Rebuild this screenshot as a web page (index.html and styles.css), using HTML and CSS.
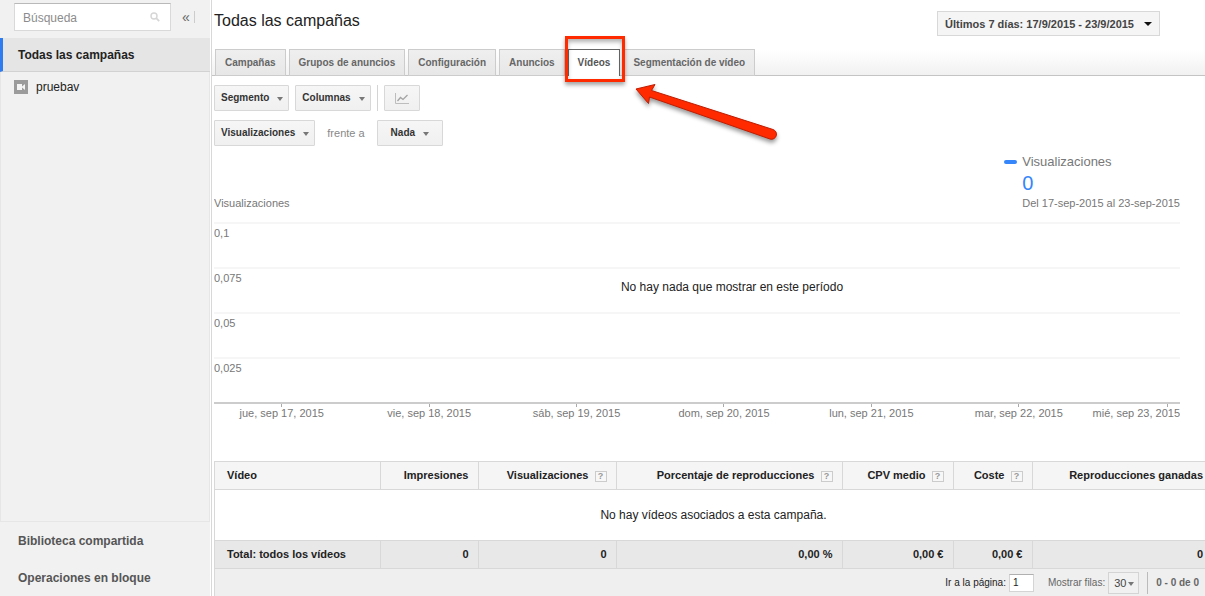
FILE: index.html
```html
<!DOCTYPE html>
<html lang="es">
<head>
<meta charset="utf-8">
<title>Todas las campañas</title>
<link rel="stylesheet" href="styles.css">
</head>
<body>
<div class="app">
  <aside class="sidebar">
    <div class="search-row">
      <div class="search">
        <input class="search-input" type="text" placeholder="Búsqueda" aria-label="Búsqueda">
        <svg class="search-icon" viewBox="0 0 10 10" aria-hidden="true"><circle cx="4" cy="4" r="3" fill="none" stroke="#d6d6d6" stroke-width="1.4"/><path d="M6.2 6.2 9.2 9.2" stroke="#d6d6d6" stroke-width="1.8"/></svg>
      </div>
      <button class="collapse" aria-label="Contraer">«</button>
    </div>
    <a class="nav-current" href="#">Todas las campañas</a>
    <div class="campaigns">
      <a class="campaign" href="#">
        <svg class="campaign-icon" viewBox="0 0 14 14" aria-hidden="true"><path fill="#9b9b9b" d="M0 0h14v14H0z"/><path fill="#f4f4f4" d="M3 4h5v6H3zM8 6.500 11 4v6L8 7.500z"/></svg>
        <span>pruebav</span>
      </a>
    </div>
    <nav class="tools">
      <a href="#">Biblioteca compartida</a>
      <a href="#">Operaciones en bloque</a>
    </nav>
  </aside>

  <main class="main">
    <header class="header">
      <div class="title-row">
        <h1 class="title">Todas las campañas</h1>
        <button class="date-range">Últimos 7 días: 17/9/2015 - 23/9/2015 <span class="caret caret-dark"></span></button>
      </div>
      <nav class="tabs">
        <a class="tab" href="#">Campañas</a>
        <a class="tab" href="#">Grupos de anuncios</a>
        <a class="tab" href="#">Configuración</a>
        <a class="tab" href="#">Anuncios</a>
        <a class="tab tab-active" href="#">Vídeos<span class="highlight"></span>
          <svg class="arrow" viewBox="0 0 150 66" aria-hidden="true"><path d="M5 6 24 1.500 20.500 7.500 142 46.500A4.800 4.800 0 0 1 139 56L18.500 14 17.500 20.500Z" fill="#ff2a00" stroke="#c01c00" stroke-width="1" stroke-linejoin="round"/></svg></a>
        <a class="tab" href="#">Segmentación de vídeo</a>
      </nav>
    </header>

    <div class="toolbar">
      <button class="btn">Segmento <span class="caret"></span></button>
      <button class="btn">Columnas <span class="caret"></span></button>
      <span class="divider"></span>
      <button class="btn btn-chart" aria-label="Gráfico"><svg class="chart-icon" viewBox="0 0 14 11" aria-hidden="true"><path d="M.5 0v10.500H14" fill="none" stroke="#bdbdbd"/><path d="M2.500 8 5.500 4.500 8 6.500 12.500 2" fill="none" stroke="#a3a3a3" stroke-width="1.300"/></svg></button>
    </div>
    <div class="toolbar toolbar-metric">
      <button class="btn">Visualizaciones <span class="caret"></span></button>
      <span class="versus">frente a</span>
      <button class="btn btn-none">Nada <span class="caret"></span></button>
    </div>

    <section class="chart">
      <div class="chart-head">
        <div class="axis-title">Visualizaciones</div>
        <div class="legend">
          <div class="legend-name">Visualizaciones</div>
          <div class="legend-value">0</div>
          <div class="legend-date">Del 17-sep-2015 al 23-sep-2015</div>
        </div>
      </div>
      <div class="plot">
        <div class="band">0,1</div>
        <div class="band">0,075</div>
        <div class="band">0,05</div>
        <div class="band">0,025</div>
        <div class="empty">No hay nada que mostrar en este período</div>
      </div>
      <div class="axis">
        <span>jue, sep 17, 2015</span>
        <span>vie, sep 18, 2015</span>
        <span>sáb, sep 19, 2015</span>
        <span>dom, sep 20, 2015</span>
        <span>lun, sep 21, 2015</span>
        <span>mar, sep 22, 2015</span>
        <span>mié, sep 23, 2015</span>
      </div>
    </section>

    <section class="report">
      <table class="table">
        <colgroup><col class="c-video"><col class="c-impr"><col class="c-views"><col class="c-rate"><col class="c-cpv"><col class="c-cost"><col></colgroup>
        <thead>
          <tr>
            <th scope="col">Vídeo</th>
            <th scope="col">Impresiones</th>
            <th scope="col">Visualizaciones <button class="help">?</button></th>
            <th scope="col">Porcentaje de reproducciones <button class="help">?</button></th>
            <th scope="col">CPV medio <button class="help">?</button></th>
            <th scope="col">Coste <button class="help">?</button></th>
            <th scope="col">Reproducciones ganadas</th>
          </tr>
        </thead>
        <tbody>
          <tr><td class="none" colspan="7">No hay vídeos asociados a esta campaña.</td></tr>
        </tbody>
        <tfoot>
          <tr><td>Total: todos los vídeos</td><td>0</td><td>0</td><td>0,00 %</td><td>0,00 €</td><td>0,00 €</td><td>0</td></tr>
        </tfoot>
      </table>
      <div class="pager">
        <label class="go" for="page">Ir a la página:</label>
        <input class="page-input" id="page" type="text" value="1">
        <label class="rows-label" for="rows">Mostrar filas:</label>
        <span class="rows"><select class="rows-select" id="rows"><option>30</option><option>50</option></select><span class="caret"></span></span>
        <span class="count">0 - 0 de 0</span>
      </div>
    </section>
  </main>
</div>
</body>
</html>
```
FILE: styles.css
```css
* { box-sizing: border-box; }
body { margin: 0; background: #fff; color: #222; font: 11px/14px "Liberation Sans", Arial, sans-serif; }
a { color: inherit; text-decoration: none; }
button, input, select { font: inherit; color: inherit; margin: 0; }
.app { display: flex; min-height: 100vh; overflow: hidden; }

.sidebar { display: flex; flex-direction: column; flex: 0 0 210px; background: #f1f1f1; }
.search-row { display: flex; align-items: center; height: 38px; padding: 0 0 4px 14px; }
.search { position: relative; width: 157px; }
.search-input { display: block; width: 100%; height: 28px; padding: 1px 8px 0; border: 1px solid #d9d9d9; border-top-color: #b9b9b9; background: #fff; font-size: 12px; }
.search-input::placeholder { color: #8c8c8c; opacity: 1; }
.search-icon { position: absolute; right: 11px; top: 9px; width: 10px; height: 10px; }
.collapse { height: 12px; margin-left: 11px; padding: 0 4px 0 0; border: 0; border-right: 1px solid #ccc; background: none; color: #666; font-size: 14px; line-height: 10px; }
.nav-current { height: 34px; padding: 0 15px; border-left: 3px solid #2f7bf0; border-bottom: 1px solid #d2d2d2; background: #e5e5e5; font-size: 12px; font-weight: bold; line-height: 35px; }
.campaigns { flex: 1; padding: 7px 13px; border: 1px solid #e6e6e6; border-top: 0; }
.campaign { display: flex; gap: 8px; align-items: center; font-size: 12px; line-height: 16px; }
.campaign-icon { width: 14px; height: 14px; }
.tools { display: flex; flex-direction: column; gap: 21px; padding: 11px 18px 10px; color: #555; font-size: 12px; font-weight: bold; line-height: 16px; }

.main { display: flex; flex-direction: column; flex: 1; min-width: 0; margin-left: 1px; padding-left: 2px; border-left: 1px solid #d8d8d8; }
.header { margin-left: -2px; padding-left: 2px; border-bottom: 1px solid #c4c4c4; background: linear-gradient(#fff 50px, #f1f1f1); }
.title-row { display: flex; justify-content: space-between; align-items: flex-start; height: 49px; padding: 11px 45px 0 0; }
.title { margin: 0; font-size: 16px; font-weight: normal; line-height: 20px; }
.date-range { display: flex; align-items: center; gap: 10px; height: 25px; padding: 0 7px; border: 1px solid #d8d8d8; background: #f5f5f5; color: #444; font-weight: bold; }
.caret { display: inline-block; border: 3px solid transparent; border-top: 4px solid #777; border-bottom: 0; }
.caret-dark { border-width: 4px 4px 0; border-top-color: #111; }
.tabs { display: flex; gap: 3px; margin: 0 0 -1px 1px; }
.tab { height: 27px; padding: 0 9px; border: 1px solid #ccc; background: linear-gradient(#efefef, #e7e7e7); color: #666; font-size: 10px; font-weight: bold; line-height: 26px; }
.tab-active { position: relative; border-color: #666; border-bottom: 0; background: #fff; color: #555; }
.highlight { position: absolute; left: -4px; right: -6px; top: -14px; bottom: -6px; border: 3px solid #ff2a00; box-shadow: 0 3px 4px rgba(0,0,0,.35), inset 0 3px 4px rgba(0,0,0,.3); }
.arrow { position: absolute; left: 62px; top: 33px; width: 150px; height: 66px; filter: drop-shadow(0 3px 2px rgba(0,0,0,.4)); }

.toolbar { display: flex; align-items: center; gap: 6px; margin-top: 9px; }
.btn { display: flex; align-items: center; gap: 8px; height: 26px; padding: 0 5px 0 6px; border: 1px solid #d8d8d8; border-radius: 1px; background: linear-gradient(#f6f6f6, #f0f0f0); color: #333; font-size: 10px; font-weight: bold; }
.btn .caret { margin-top: 1px; }
.divider { width: 1px; height: 26px; background: #d4d4d4; }
.btn-chart { padding: 0 10px; }
.chart-icon { width: 14px; height: 11px; }
.toolbar-metric { gap: 12px; }
.btn-none { padding: 0 13px; }
.versus { color: #888; }

.chart { margin-right: 25px; padding-top: 8px; color: #777; overflow: hidden; }
.chart-head { display: flex; justify-content: space-between; align-items: flex-end; padding-bottom: 12px; }
.legend-name { position: relative; font-size: 13px; line-height: 16px; }
.legend-name::before { content: ""; position: absolute; left: -18px; top: 6px; width: 13px; height: 4px; border-radius: 2px; background: #3585fb; }
.legend-value { color: #3585fb; font-size: 20px; line-height: 26px; }
.plot { position: relative; border-bottom: 2px solid #ccc; }
.band { height: 45px; padding-top: 2px; border-top: 2px solid #f6f6f6; line-height: 15px; }
.empty { position: absolute; left: 70px; right: 0; top: 57px; color: #222; font-size: 12px; line-height: 16px; text-align: center; }
.axis { display: grid; grid-template-columns: repeat(6, 12fr) 7fr; margin-left: -6px; line-height: 12px; text-align: center; white-space: nowrap; }
.axis span::before { content: ""; display: block; width: 1px; height: 3px; margin: 0 auto; background: #aaa; }
.axis span:last-child { text-align: right; }
.axis span:last-child::before { margin-right: 12px; }

.report { display: flex; flex-direction: column; flex: 1; margin: 42px -8px 0 0; border-left: 1px solid #d8d8d8; background: #efefef; }
.table { width: 100%; table-layout: fixed; border-collapse: collapse; }
.c-video { width: 165px; } .c-impr { width: 98px; } .c-views { width: 138px; } .c-rate { width: 226px; } .c-cpv { width: 111px; } .c-cost { width: 79px; }
th, td { height: 28px; padding: 0 9px 1px 12px; border: 1px solid #d8d8d8; border-left: 0; text-align: right; font-weight: bold; white-space: nowrap; }
th:first-child, tfoot td:first-child { text-align: left; }
th { background: #f5f5f5; }
tfoot td { background: #e8e8e8; }
.table .none { height: 51px; padding: 0; background: #fff; font-size: 12px; font-weight: normal; text-align: center; }
.help { width: 12px; height: 11px; margin-left: 3px; padding: 0; border: 1px solid #ccc; background: #f7f7f7; color: #999; font-size: 9px; font-weight: bold; line-height: 9px; vertical-align: middle; }

.pager { display: flex; align-items: center; justify-content: flex-end; height: 27px; padding-right: 14px; font-size: 10px; }
.page-input { width: 25px; height: 18px; margin: 0 14px 0 3px; padding: 0 3px; border: 1px solid #d4d4d4; border-top-color: #b0b0b0; background: #fff; }
.rows-label { color: #666; }
.rows { position: relative; margin: 0 8px 0 3px; }
.rows-select { display: block; width: 31px; height: 22px; padding: 0 5px; border: 1px solid #d4d4d4; background: #f1f1f1; appearance: none; color: #444; font-size: 11px; }
.rows .caret { position: absolute; right: 5px; top: 10px; pointer-events: none; }
.count { padding-left: 8px; border-left: 1px solid #bbb; color: #666; font-weight: bold; line-height: 22px; }
```
